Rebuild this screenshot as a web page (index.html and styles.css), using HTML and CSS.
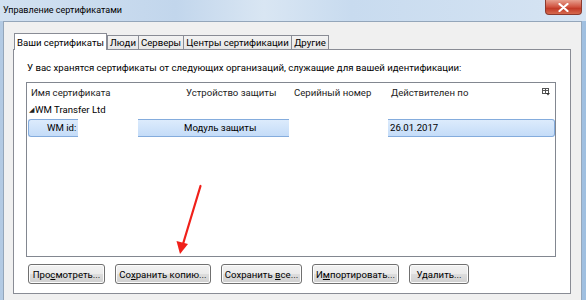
FILE: index.html
```html
<!doctype html>
<html>
<head>
    <meta charset="UTF-8">
    <title>Управление сертификатами</title>
    <link rel="stylesheet" href="styles.css">
</head>
<body>
<div class="window">
    <div class="titlebar">
        <span class="title">Управление сертификатами</span>
        <span class="close">
            <svg width="11" height="9" viewBox="0 0 11 9"><path d="M1.5 1 L9.5 8 M9.5 1 L1.5 8" stroke="#fff" stroke-width="2.2" stroke-linecap="round"/></svg>
        </span>
    </div>

    <div class="client">
        <div class="tabs">
            <div class="tab active t-mine">Ваши сертификаты</div>
            <div class="tab t-people">Люди</div>
            <div class="tab t-servers">Серверы</div>
            <div class="tab t-ca">Центры сертификации</div>
            <div class="tab t-other">Другие</div>
        </div>

        <div class="panel">
            <p class="intro">У вас хранятся сертификаты от следующих организаций, служащие для вашей идентификации:</p>

            <div class="listbox">
                <div class="header">
                    <span class="col col-name">Имя сертификата</span>
                    <span class="col col-device">Устройство защиты</span>
                    <span class="col col-serial">Серийный номер</span>
                    <span class="col col-date">Действителен по</span>
                    <svg class="col-picker" width="8" height="8" viewBox="0 0 8 8">
                        <rect x="0.5" y="0.5" width="6" height="5" fill="none" stroke="#555"/>
                        <path d="M0.5 2.5 H6.5 M3.5 0.5 V5.5" stroke="#555"/>
                        <path d="M4 5 H8 L6 7.5 Z" fill="#333"/>
                    </svg>
                </div>
                <div class="group"><span class="twisty">&#9698;</span>WM Transfer Ltd</div>
                <div class="row">
                    <span class="sel seg-a">WM id:</span>
                    <span class="redact gap-a"></span>
                    <span class="sel seg-b">Модуль защиты</span>
                    <span class="redact gap-b"></span>
                    <span class="sel seg-c">26.01.2017</span>
                </div>
            </div>

            <div class="buttons">
                <button class="btn w-view">Про<u>с</u>мотреть...</button>
                <button class="btn w-copy">Со<u>х</u>ранить копию...</button>
                <button class="btn w-all">Сохранить <u>в</u>се...</button>
                <button class="btn w-import">И<u>м</u>портировать...</button>
                <button class="btn w-del">У<u>д</u>алить...</button>
            </div>
        </div>
    </div>

    <!-- стрелка поверх окна -->
    <svg class="arrow" width="586" height="300" viewBox="0 0 586 300">
        <path d="M200.5 186 L183 244" stroke="#f0201a" stroke-width="2.2" stroke-linecap="round"/>
        <path d="M176.5 241 L180 254 L188 244 Z" fill="#f0201a"/>
    </svg>
</div>
</body>
</html>
```

FILE: styles.css
```css
body {
    margin: 0;
    padding: 0;
    font-family: Roboto, "Liberation Sans", sans-serif;
    font-size: 9.6px;
    color: #000;
    background: #b9cfe6;
}
.window {
    position: relative;
    width: 586px;
    height: 300px;
    overflow: hidden;
    background: linear-gradient(90deg, #b3cae3 0%, #c9dbee 20%, #d3e2f2 50%, #c4d8ec 80%, #9fbfe0 100%);
}
.titlebar {
    height: 21px;
    display: flex;
    justify-content: space-between;
    align-items: flex-start;
    background: linear-gradient(90deg, #d2e1f1 0%, #c2d6ec 30%, #d9e6f3 45%, #c8dbef 60%, #d6e4f3 100%);
}
.title {
    padding-left: 3px;
    font-size: 9px;
    line-height: 20px;
}
.close {
    width: 37px;
    height: 15px;
    margin-right: 4px;
    display: flex;
    justify-content: center;
    align-items: center;
    background: linear-gradient(#e7a08f, #d0523f 50%, #c23b28 60%, #d66a4f);
    border: 1px solid #8c3a2e;
    border-top: none;
    border-radius: 0 0 4px 4px;
    box-sizing: border-box;
}
.client {
    margin: 0 4px 0 3px;
    height: 290px;
    background: #f0f0f0;
    border: 1px solid #94a6ba;
    padding: 11px 10px 0 9px;
}
.tabs {
    display: flex;
    align-items: flex-end;
    height: 16px;
    position: relative;
    z-index: 1;
}
.tab {
    height: 14px;
    line-height: 13px;
    border: 1px solid #898c95;
    border-bottom: none;
    margin-left: -1px;
    background: linear-gradient(#f3f3f3, #e6e6e6);
    box-sizing: border-box;
    white-space: nowrap;
    text-align: center;
}
.tab.active {
    height: 17px;
    margin-left: 1px;
    margin-bottom: -1px;
    padding-top: 1px;
    background: #fff;
    line-height: 15px;
}
.tab.active + .tab {
    margin-left: 0;
}
.t-mine { width: 93px; }
.t-people { width: 32px; }
.t-servers { width: 46px; }
.t-ca { width: 109px; }
.t-other { width: 38px; }
.panel {
    background: #fff;
    border: 1px solid #898c95;
    padding: 11px 14px 9px 12px;
}
.intro {
    margin: 0 0 7px 1px;
    line-height: 14px;
    white-space: nowrap;
}
.listbox {
    height: 173px;
    border: 1px solid #828790;
}
.header {
    display: flex;
    align-items: center;
    height: 18px;
    color: #222;
}
.col {
    white-space: nowrap;
    box-sizing: border-box;
}
.col-name {
    width: 153px;
    padding-left: 4px;
}
.col-device {
    width: 108px;
    padding-left: 6px;
}
.col-serial {
    width: 98px;
    padding-left: 6px;
}
.col-date {
    flex: 1;
    padding-left: 5px;
}
.col-picker {
    margin-right: 5px;
}
.group {
    height: 18px;
    line-height: 18px;
    padding-left: 2px;
}
.twisty {
    font-size: 7px;
    vertical-align: 1px;
    margin-right: 1px;
    color: #222;
}
.row {
    display: flex;
    height: 18px;
    margin: 0 0 0 1px;
}
.sel {
    box-sizing: border-box;
    line-height: 16px;
    white-space: nowrap;
    background: linear-gradient(#dcebfc, #c4dcf8);
    border-top: 1px solid #84acdd;
    border-bottom: 1px solid #84acdd;
}
.seg-a {
    width: 50px;
    padding-left: 18px;
    border-left: 1px solid #84acdd;
    border-radius: 3px 0 0 3px;
}
.gap-a {
    width: 60px;
}
.seg-b {
    width: 151px;
    padding-left: 46px;
}
.gap-b {
    width: 99px;
}
.seg-c {
    width: 167px;
    padding-left: 2px;
    border-right: 1px solid #84acdd;
    border-radius: 0 3px 3px 0;
}
.redact {
    background: #fff;
}
.buttons {
    display: flex;
    gap: 10px;
    margin: 7px 0 0 2px;
}
.btn {
    height: 20px;
    padding: 0;
    font-family: inherit;
    font-size: 9.6px;
    color: #000;
    white-space: nowrap;
    border: 1px solid #707070;
    border-radius: 3px;
    background: linear-gradient(#f2f2f2 0%, #ebebeb 48%, #dddddd 52%, #cfcfcf 100%);
    box-shadow: inset 0 0 0 1px #fcfcfc;
}
.btn u {
    text-decoration-thickness: 1px;
}
.w-view { width: 77px; }
.w-copy { width: 96px; }
.w-all { width: 81px; }
.w-import { width: 87px; }
.w-del { width: 60px; }
.arrow {
    position: absolute;
    left: 0;
    top: 0;
    pointer-events: none;
}
```
